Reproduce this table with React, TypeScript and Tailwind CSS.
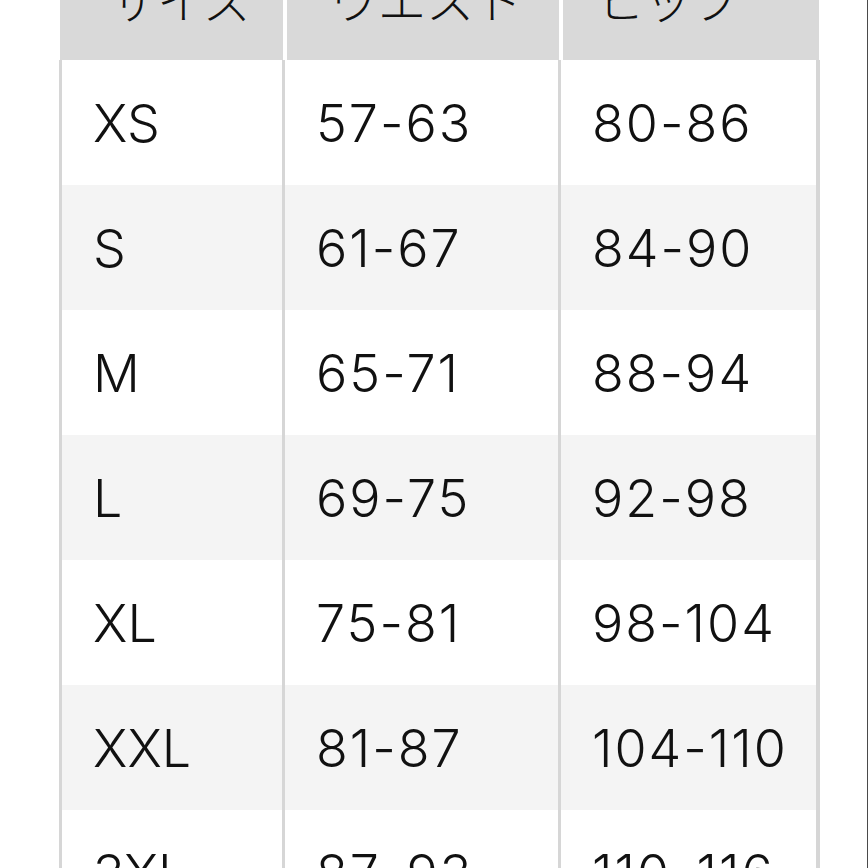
const rows = [
  ['XS', '57-63', '80-86'],
  ['S', '61-67', '84-90'],
  ['M', '65-71', '88-94'],
  ['L', '69-75', '92-98'],
  ['XL', '75-81', '98-104'],
  ['XXL', '81-87', '104-110'],
  ['3XL', '87-93', '110-116'],
];

export default function App() {
  return (
    <div className="h-[868px] w-full overflow-hidden bg-white border-r border-[#4a4a4a]">
      <div className="-mt-[65px] ml-[59px] w-[761px]">
        {/* header row, top half sits above the page */}
        <div
          className="grid h-[125px] grid-cols-[223px_272px_256px] gap-x-[4px] pl-px text-[48px] font-light text-[#111]"
          style={{ fontFamily: '"Noto Sans CJK JP", "Noto Sans", sans-serif' }}
        >
          <div className="flex items-center bg-[#d9d9d9] pl-[49px]">サイズ</div>
          <div className="flex items-center bg-[#d9d9d9] pl-[43px]">ウエスト</div>
          <div className="flex items-center bg-[#d9d9d9] pl-[33px]">ヒップ</div>
        </div>

        {rows.map((r, i) => (
          <div
            key={r[0]}
            className="grid h-[125px] grid-cols-[220px_273px_255px] gap-x-[3px] bg-[#d6d6d6] px-[3px] text-[52px] font-light text-[#111]"
            style={{ fontFamily: 'Inter, "Noto Sans", sans-serif' }}
          >
            {r.map((c, j) => (
              <div
                key={j}
                className={
                  'flex items-center pt-[2px] pl-[31px] ' +
                  (i % 2 === 1 ? 'bg-[#f4f4f4] ' : 'bg-white ') +
                  (j === 0 ? '' : 'tracking-[2px]')
                }
              >
                {c}
              </div>
            ))}
          </div>
        ))}
      </div>
    </div>
  );
}
